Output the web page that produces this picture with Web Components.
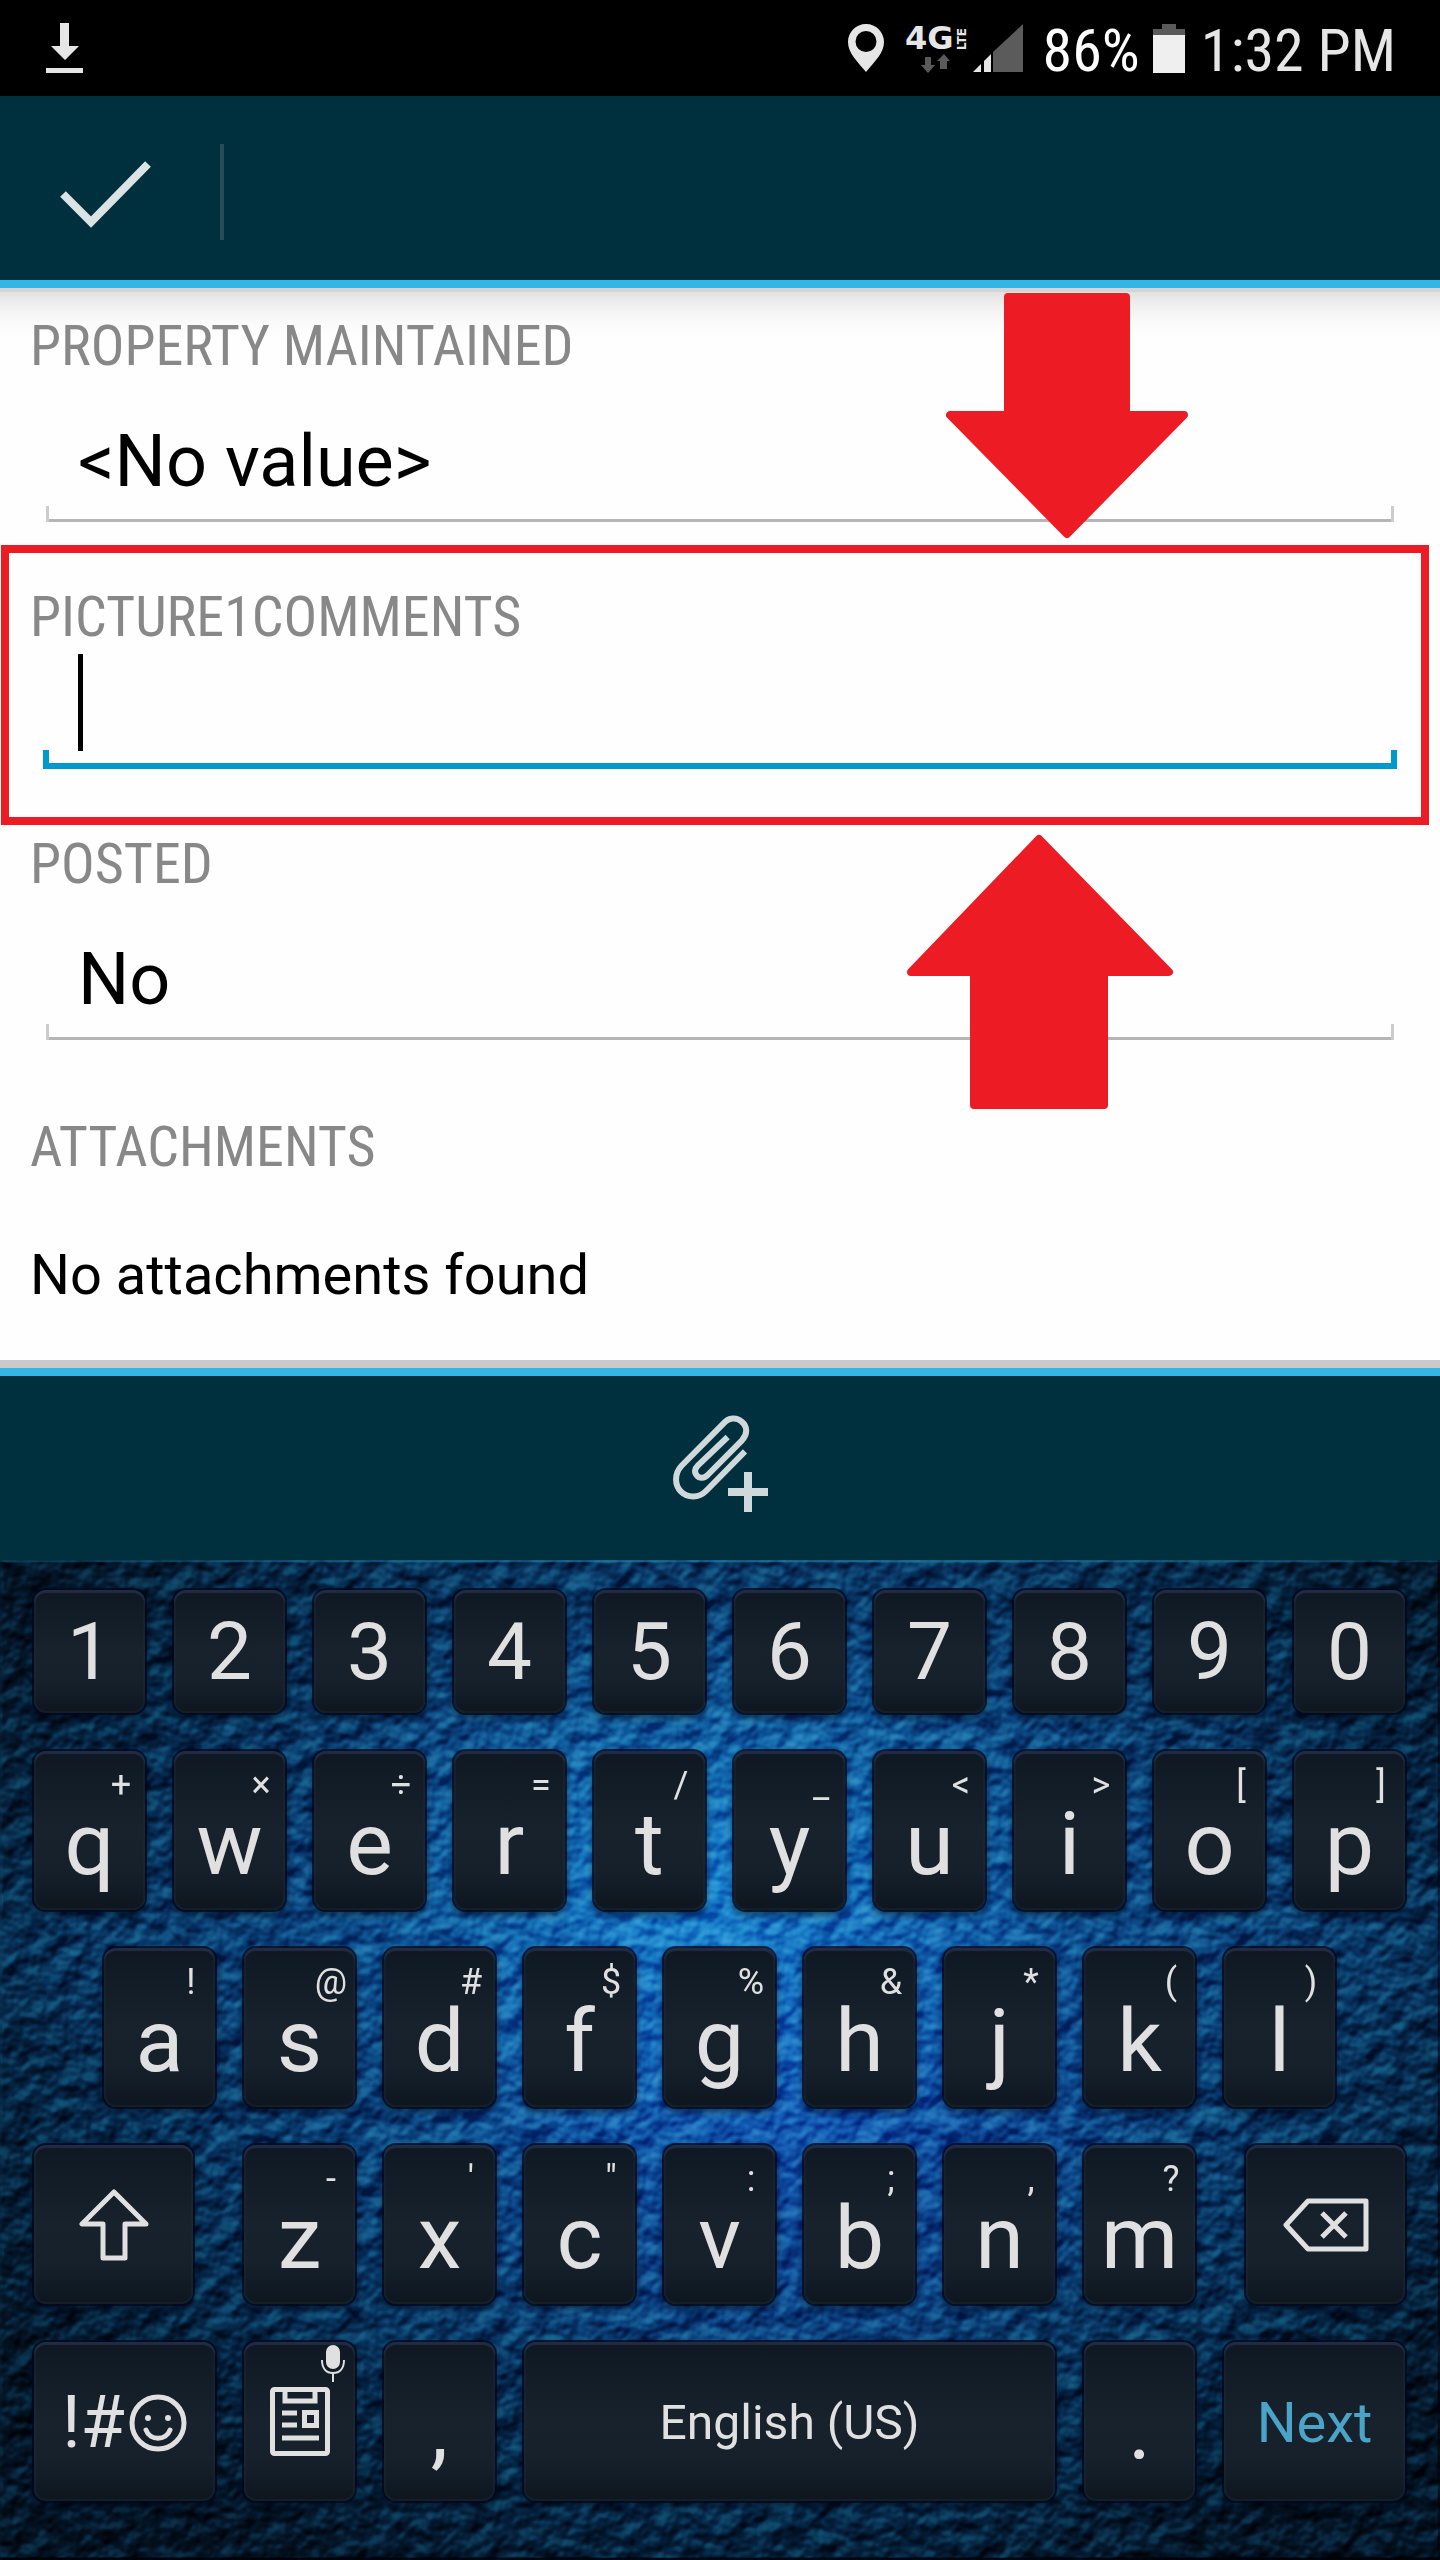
<!DOCTYPE html>
<html lang="en">
<head>
<meta charset="utf-8">
<meta name="viewport" content="width=device-width">
<title>Edit feature</title>
<style>
  html, body { margin: 0; background: #000; }
  body { font-family: Roboto, "Liberation Sans", sans-serif; }
</style>
</head>
<body>
<collector-app></collector-app>

<script>
const define = (name, html, setup) => {
  const tpl = document.createElement('template');
  tpl.innerHTML = html;
  customElements.define(name, class extends HTMLElement {
    constructor() {
      super();
      this.attachShadow({ mode: 'open' }).append(tpl.content.cloneNode(true));
    }
    connectedCallback() { if (setup) setup(this, this.shadowRoot); }
  });
};

define('status-bar', `
<style>
  :host { display: flex; align-items: center; justify-content: space-between; height: 96px;
    padding: 0 44px 0 46px; background: #000; color: #e6e6e6;
    font: 60px/70px "Roboto Condensed", Roboto, sans-serif; }
  .right { display: flex; align-items: center; }
  svg { display: block; flex: none; overflow: visible; }
  span { padding-top: 6px; }
  .pin { margin-right: 22px; }
  .net { margin-right: 7px; }
  .signal { margin-right: 20px; }
  .percent { color: #fff; margin-right: 13px; }
  .battery { margin-right: 16px; }
</style>
<svg width="38" height="50" viewBox="46 24 38 50" fill="#e6e6e6"><path d="M60 24h9v23h10L65 61 51 47h9zM46 69h37v5H46z"/></svg>
<div class="right">
  <svg class="pin" width="36" height="48" viewBox="848 25 36 48"><path fill="#e6e6e6" fill-rule="evenodd" d="M866 25c-10 0-18 8-18 18 0 11 9 19 18 30 9-11 18-19 18-30 0-10-8-18-18-18zm0 7a10.500 10.500 0 1 1 0 21 10.500 10.500 0 0 1 0-21z"/></svg>
  <svg class="net" width="60" height="50" viewBox="906 24 60 50">
    <text x="905" y="50" font-family="DejaVu Sans" font-weight="700" font-size="32" fill="#e6e6e6">4G</text>
    <text transform="translate(966 51) rotate(-90)" font-family="DejaVu Sans" font-weight="700" font-size="12" fill="#e6e6e6">LTE</text>
    <path fill="#5a5a5a" d="M925 58h6v8h4l-7 8-7-8h4zM940 70h7v-8h3l-6-7-7 7h3z"/>
  </svg>
  <svg class="signal" width="50" height="49" viewBox="973 25 50 49"><path fill="#e6e6e6" d="M973 73l8-8v8zM984 62l7-7v18h-7z"/><path fill="#5b5b5b" d="M993 53l30-28v48h-30z"/></svg>
  <span class="percent">86%</span>
  <svg class="battery" width="32" height="49" viewBox="0 0 32 49"><path fill="#5a5a5a" d="M9 0h14v5h9v6H0V5h9z"/><path fill="#efefef" d="M0 11h32v38H0z"/></svg>
  <span>1:32 PM</span>
</div>`);

define('action-bar', `
<style>
  :host { display: flex; align-items: center; height: 184px; background: #002f3e; border-bottom: 8px solid #33b5e5; }
  button { display: flex; align-items: center; justify-content: center; width: 220px; height: 100%;
    box-sizing: border-box; padding: 12px 8px 0 0; border: 0; background: none; }
  i { width: 4px; height: 96px; margin-top: 8px; background: #264c59; }
</style>
<button aria-label="Done"><svg width="92" height="68" viewBox="59 160 92 68" fill="none" stroke="#dce3e5" stroke-width="8"><path d="M62 194l28 28 57-58"/></svg></button><i></i>`);

define('form-field', `
<style>
  :host { display: block; position: relative; }
  label { display: block; color: #888; font: 56px/66px "Roboto Condensed", Roboto, sans-serif; }
  .box { --c: #b5b5b5; --t: #ccc; --w: 3px; margin: 0 16px; padding: 41px 32px 18px; display: flex;
    background: linear-gradient(var(--t), var(--t)) left bottom / var(--w) 16px no-repeat,
      linear-gradient(var(--t), var(--t)) right bottom / var(--w) 16px no-repeat,
      linear-gradient(var(--c), var(--c)) left bottom / 100% var(--w) no-repeat; }
  select, input { appearance: none; flex: 1; min-width: 0; height: 84px; padding: 0; margin: 0; border: 0; outline: 0;
    background: none; color: #000; font: 72px/84px Roboto, "Liberation Sans", sans-serif; opacity: 1; caret-color: transparent; }
  :host([active]) .box { --c: #0099cc; --t: #0099cc; --w: 6px; margin: 0 13px; padding: 4px 35px 18px;
    background-size: 6px 19px, 6px 19px, 100% 6px; }
  .caret { width: 5px; height: 97px; background: #000; }
</style>
<label for="control"></label>
<div class="box"></div>
<slot></slot>`, (host, root) => {
  root.querySelector('label').textContent = host.getAttribute('label');
  const box = root.querySelector('.box');
  if (host.hasAttribute('active')) {
    box.innerHTML = '<span class="caret"></span><input id="control" type="text">';
  } else {
    box.innerHTML = '<select id="control"><option></option></select>';
    box.querySelector('option').textContent = host.getAttribute('value');
  }
});

define('feature-form', `
<style>
  :host { display: block; position: relative; padding: 25px 30px 52px; border-bottom: 8px solid #cacaca;
    background: linear-gradient(#d5d5d5 0, #d5d5d5 4px, #e2e2e2 4px, #f0f0f0 18px, #fafafa 34px, #fefefe 50px); }
  form { display: flex; flex-direction: column; gap: 62px; }
  h2 { margin: 12px 0 0; color: #888; font: 56px/66px "Roboto Condensed", Roboto, sans-serif; }
  p { margin: 0; color: #000; font-size: 56px; line-height: 66px; }
  .frame { position: absolute; inset: -39px -19px -56px -29px; border: 8px solid #ed1c24; pointer-events: none; }
  .arrow { position: absolute; fill: #ed1c24; stroke: #ed1c24; stroke-width: 8px; stroke-linejoin: round; pointer-events: none; }
  .down { top: 5px; right: 251px; }
  .up { top: 546px; right: 266px; }
</style>
<form>
  <form-field label="PROPERTY MAINTAINED" value="&lt;No value&gt;"></form-field>
  <form-field label="PICTURE1COMMENTS" active><div class="frame"></div></form-field>
  <form-field label="POSTED" value="No"></form-field>
  <h2>ATTACHMENTS</h2>
  <p>No attachments found</p>
</form>
<svg class="arrow down" width="244" height="250" viewBox="0 0 244 250"><path d="M63 4h118v118h58L122 241 5 122h58z"/></svg>
<svg class="arrow up" width="268" height="276" viewBox="0 0 268 276"><path d="M133 5l130 133h-65v133H68V138H5z"/></svg>`);

define('attachment-bar', `
<style>
  :host { display: flex; justify-content: center; height: 184px; background: #002f3e; border-top: 8px solid #33b5e5; }
  button { display: flex; align-items: center; justify-content: center; width: 220px; padding: 0 0 12px; border: 0; background: none; }
</style>
<button aria-label="Add attachment"><svg width="100" height="100" viewBox="210 186 300 300" fill="none" stroke="#cfd8db" stroke-width="18">
  <path d="M435 304L318 423C296 445 262 444 243 425C224 406 222 372 244 348L370 221C386 201 410 201 425 215C443 230 443 252 426 271L323 375C313 386 298 386 290 376C282 367 284 356 294 346L383 261"/>
  <path stroke="none" fill="#cfd8db" d="M432 366h24v48h48v24h-48v48h-24v-48h-48v-24h48z"/></svg></button>`);

define('kb-key', `
<style>
  :host { display: block; flex: 0 0 calc((100% - 261px) / 10); height: 159px; min-width: 0; }
  :host([number]) { height: 123px; }
  :host([wide]) { flex: 1 1 0; }
  :host([space]) { flex: 0 0 calc((100% - 261px) / 10 * 4 + 87px); }
  button { display: flex; flex-direction: column; align-items: center; justify-content: center; width: 100%; height: 100%;
    padding: 0; border: 0; border-radius: 12px; color: #e0e0e0; font: 80px/94px Roboto, "Liberation Sans", sans-serif;
    background: linear-gradient(#0f1822, #17222d 50%, #16202b 75%, #0d161f);
    box-shadow: inset 0 3px 1px #222b42, inset 0 0 0 2px rgba(40,46,52,.3), 0 0 0 2px rgba(0,8,30,.75), 0 4px 6px 2px rgba(0,8,26,.5); }
  .alt { display: none; align-self: flex-end; width: 48px; height: 46px; text-align: center; font-size: 36px; line-height: 46px; }
  :host([alt]) button { justify-content: flex-start; padding-top: 11px; font-size: 88px; line-height: 72px; }
  :host([alt]) .alt { display: block; }
  :host([punct]) button { justify-content: flex-start; padding-top: 50px; font-size: 88px; line-height: 72px; }
  :host([space]) button { font-size: 48px; line-height: 56px; padding-top: 2px; }
  :host([next]) button { font-size: 56px; line-height: 66px; padding-top: 2px; color: #4ba3c7; }
  :host([sym]) button { font-size: 72px; line-height: 84px; padding-top: 2px; }
  .main { display: flex; align-items: center; gap: 4px; }
</style>
<button type="button"><span class="alt"></span><span class="main"><slot></slot></span></button>`, (host, root) => {
  root.querySelector('.alt').textContent = host.getAttribute('alt') || '';
});

define('clip-icon', `
<style>
  :host { display: block; position: relative; }
  svg { display: block; }
  .mic { position: absolute; left: 50px; top: -43px; }
</style>
<svg width="60" height="69" viewBox="0 0 60 69" fill="none" stroke="#e0e0e0" stroke-width="5">
  <rect x="2.500" y="2.500" width="55" height="64" rx="2"/><path d="M15 3v11h30V3"/>
  <path d="M12 26h15M12 38h15M12 51h37"/><rect x="34.500" y="25.500" width="12" height="13"/></svg>
<svg class="mic" width="26" height="38" viewBox="0 0 26 38" fill="none" stroke="#e0e0e0" stroke-width="2">
  <rect x="6" y="1" width="14" height="24" rx="7" fill="#e0e0e0" stroke="none"/><path d="M2 16c0 8 4 13 11 13s11-5 11-13M13 29v9"/></svg>`);

define('soft-keyboard', `
<style>
  :host { display: block; position: relative; padding: 30px 35px 59px 34px; overflow: hidden; isolation: isolate;
    background:
      radial-gradient(ellipse 28% 30% at 49% 34%, rgba(26,138,212,.9), rgba(22,120,205,0)),
      radial-gradient(ellipse 26% 30% at 55% 54%, rgba(18,80,180,.8), rgba(18,80,180,0)),
      radial-gradient(ellipse 66% 16% at 50% 38%, rgba(14,82,145,.75), rgba(14,82,145,0)),
      radial-gradient(ellipse 62% 66% at 52% 42%, #105fab, #0b457e 50%, #062a4c 80%, #041628); }
  .texture { position: absolute; inset: 0; width: 100%; height: 100%; z-index: -1; mix-blend-mode: soft-light; opacity: .9; }
  .rows { display: flex; flex-direction: column; gap: 38px; }
  .row { display: flex; gap: 29px; justify-content: center; }
  .shift { margin-right: 22px; }
  .delete { margin-left: 22px; }
  svg { display: block; }
</style>
<svg class="texture" aria-hidden="true">
  <filter id="leather" x="0" y="0" width="100%" height="100%" color-interpolation-filters="sRGB">
    <feTurbulence type="fractalNoise" baseFrequency="0.045 0.045" numOctaves="3" seed="7"/>
    <feGaussianBlur stdDeviation="1" result="n"/>
    <feDiffuseLighting in="n" surfaceScale="6" diffuseConstant="1" lighting-color="#fff"><feDistantLight azimuth="250" elevation="28"/></feDiffuseLighting>
  </filter>
  <rect width="100%" height="100%" filter="url(#leather)"/>
</svg>
<div class="rows"></div>`, (host, root) => {
  const esc = s => s.replace(/&/g, '&amp;').replace(/"/g, '&quot;').replace(/</g, '&lt;');
  const keys = (letters, alts) => [...letters].map((c, i) => `<kb-key alt="${esc(alts[i])}">${c}</kb-key>`).join('');
  const shift = '<kb-key wide class="shift"><svg width="70" height="72" viewBox="0 0 70 72" fill="none" stroke="#e0e0e0" stroke-width="5" stroke-linejoin="round" role="img" aria-label="Shift"><path d="M35 3L3 35h21v34h22V35h21z"/></svg></kb-key>';
  const del = '<kb-key wide class="delete"><svg width="86" height="54" viewBox="0 0 86 54" fill="none" stroke="#e0e0e0" stroke-width="5" stroke-linejoin="round" role="img" aria-label="Delete"><path d="M25 3h58v48H25L3 27zM39 15l24 24M63 15L39 39"/></svg></kb-key>';
  const smile = '<svg width="58" height="58" viewBox="0 0 58 58" fill="none" stroke="#e0e0e0" stroke-width="5"><circle cx="29" cy="29" r="26"/><path stroke-linecap="round" d="M17 36c4 11 20 11 24 0"/><g fill="#e0e0e0" stroke="none"><circle cx="19" cy="24" r="3"/><circle cx="39" cy="24" r="3"/></g></svg>';
  root.querySelector('.rows').innerHTML = [
    [...'1234567890'].map(c => `<kb-key number>${c}</kb-key>`).join(''),
    keys('qwertyuiop', '+×÷=/_<>[]'),
    keys('asdfghjkl', '!@#$%&*()'),
    shift + keys('zxcvbnm', '-\'":;,?') + del,
    `<kb-key wide sym>!#${smile}</kb-key><kb-key><clip-icon></clip-icon></kb-key><kb-key punct>,</kb-key>` +
    '<kb-key space>English (US)</kb-key><kb-key punct>.</kb-key><kb-key wide next>Next</kb-key>'
  ].map(r => `<div class="row">${r}</div>`).join('');
});

define('collector-app', `
<style>:host { display: flex; flex-direction: column; min-height: 100vh; } soft-keyboard { flex: 1; }</style>
<status-bar></status-bar>
<action-bar></action-bar>
<feature-form></feature-form>
<attachment-bar></attachment-bar>
<soft-keyboard></soft-keyboard>`);
</script>
</body>
</html>
